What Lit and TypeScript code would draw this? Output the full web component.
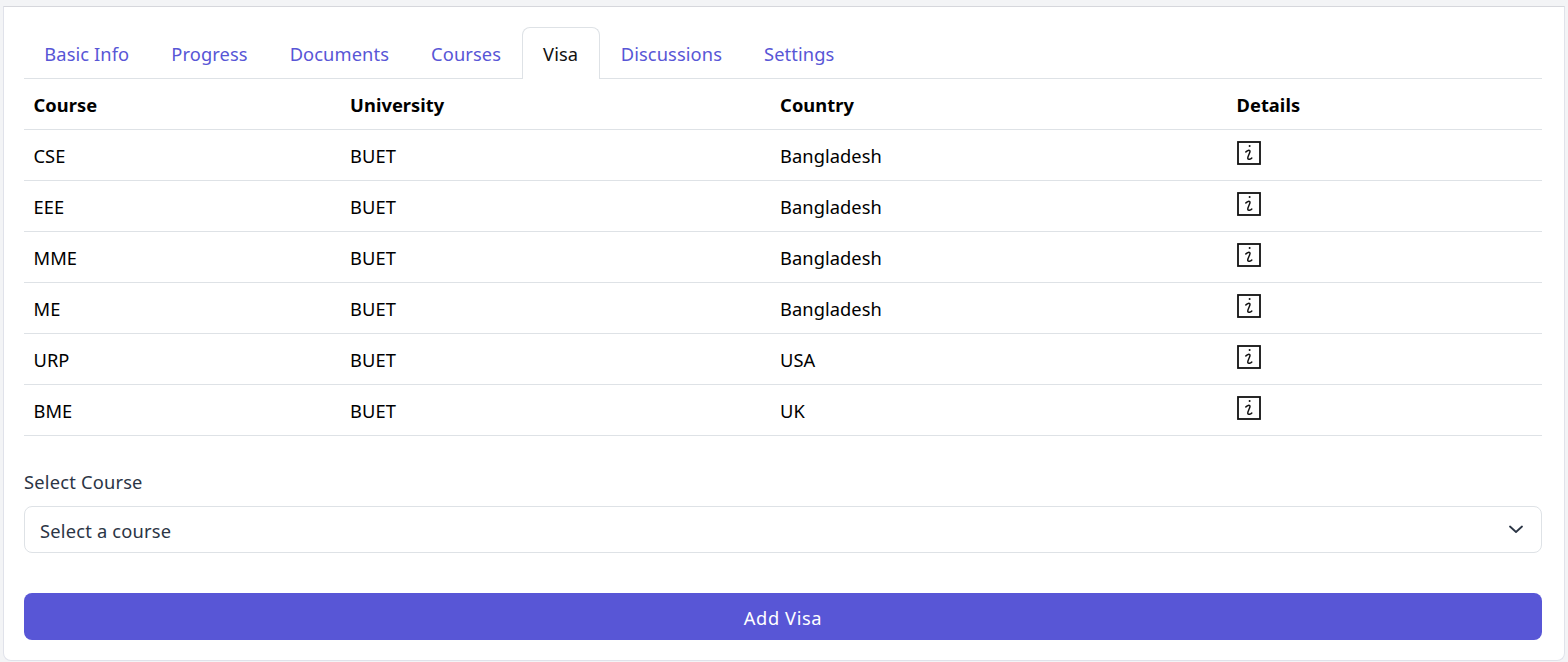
import { LitElement, html, css, svg } from "lit";
import { customElement } from "lit/decorators.js";

const rows = [
  ["CSE", "BUET", "Bangladesh"],
  ["EEE", "BUET", "Bangladesh"],
  ["MME", "BUET", "Bangladesh"],
  ["ME", "BUET", "Bangladesh"],
  ["URP", "BUET", "USA"],
  ["BME", "BUET", "UK"],
];
const tabs = ["Basic Info", "Progress", "Documents", "Courses", "Visa", "Discussions", "Settings"];

@customElement("app-root")
export class AppRoot extends LitElement {
  static styles = css`
    :host { display: block; height: 662px; overflow: hidden; background: #f3f4f6; font-family: "Noto Sans", "Open Sans", sans-serif; }
    .card { box-sizing: border-box; margin: 6px 3px 0 3px; height: 655px; background: #fff; border: 1px solid #e0e2ea; border-top-color: #d6d7dc; border-radius: 0 0 8px 8px; padding: 20px 22px 20px 20px; }
    .tabs { display: flex; height: 52px; box-sizing: border-box; border-bottom: 1px solid #dee2e6; }
    .tab { box-sizing: border-box; height: 52px; padding: 0 20px; display: flex; align-items: center; font-size: 18.3px; letter-spacing: 0.1px; color: #5856d6; border: 1px solid transparent; border-bottom: 0; border-radius: 8px 8px 0 0; }
    .tab:first-child { padding-left: 19.3px; }
    .tab.active { color: #111; background: #fff; border-color: #dee2e6; height: 52px; padding-right: 20.5px; }
    table { width: 100%; border-collapse: collapse; table-layout: fixed; font-size: 18.3px; letter-spacing: 0.05px; color: #000; }
    th, td { height: 51px; padding: 3px 10px 0 9.5px; text-align: left; border-bottom: 1px solid #dee2e6; box-sizing: border-box; line-height: 24px; }
    th { height: 50px; padding-top: 2px; font-weight: 700; }
    svg.info { display: block; width: 24px; height: 24px; margin-top: -6px; margin-left: 0.5px; }
    label { display: block; margin-top: 32px; font-size: 18.3px; letter-spacing: 0.2px; line-height: 27px; color: #2b3545; }
    .select { box-sizing: border-box; margin-top: 11px; height: 47px; padding: 0 16px 0 15px; display: flex; align-items: center; justify-content: space-between; border: 1px solid #dee2e6; border-radius: 8px; font-size: 18.3px; letter-spacing: 0.2px; color: #2b3545; }
    .select span { position: relative; top: 1px; }
    .btn { box-sizing: border-box; margin-top: 40px; height: 47px; padding-top: 2px; display: flex; align-items: center; justify-content: center; background: #5856d6; border-radius: 8px; color: #fff; font-size: 18.3px; letter-spacing: 0.6px; }
  `;

  infoIcon() {
    return svg`<svg class="info" viewBox="0 0 24 24" fill="none" stroke="#111">
      <rect x="1" y="1" width="22" height="22" stroke-width="1.8"/>
      <circle cx="12.6" cy="5" r="1" fill="#111" stroke="none"/>
      <path d="M8.800 11c1.200-1.500 3.900-2.500 4.200-.8.300 1.800-2.800 5.300-2.200 7.300.4 1.400 2.800.9 4-.5" stroke-width="1.500" stroke-linecap="round"/>
    </svg>`;
  }

  render() {
    return html`
      <div class="card">
        <div class="tabs">
          ${tabs.map((t) => html`<div class="tab ${t === "Visa" ? "active" : ""}">${t}</div>`)}
        </div>
        <table>
          <colgroup>
            <col style="width:316.6px" /><col style="width:430px" /><col style="width:456.4px" /><col />
          </colgroup>
          <thead><tr><th>Course</th><th>University</th><th>Country</th><th>Details</th></tr></thead>
          <tbody>
            ${rows.map((r) => html`<tr><td>${r[0]}</td><td>${r[1]}</td><td>${r[2]}</td><td>${this.infoIcon()}</td></tr>`)}
          </tbody>
        </table>
        <label>Select Course</label>
        <div class="select">
          <span>Select a course</span>
          <svg width="16" height="16" viewBox="0 0 16 16" fill="none" stroke="#2b3545" stroke-width="1.8" stroke-linecap="round" stroke-linejoin="round"><path d="M1 5.500L7 11l6-5.500"/></svg>
        </div>
        <div class="btn">Add Visa</div>
      </div>
    `;
  }
}
